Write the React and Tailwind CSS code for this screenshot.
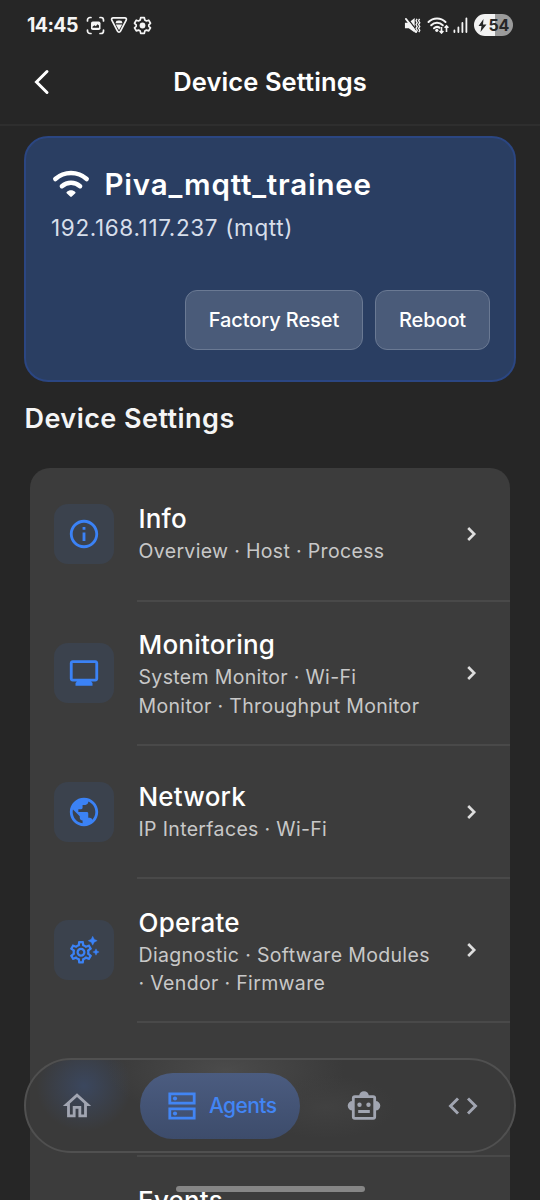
import React from 'react';
import {
  MdInfoOutline,
  MdMonitor,
  MdPublic,
  MdOutlineHome,
  MdOutlineSettings,
} from 'react-icons/md';

function StatusBar() {
  return (
    <div className="flex h-[50px] shrink-0 items-center justify-between pr-[27px] pl-[27px] text-[#f5f5f5]">
      <div className="flex items-center">
        <span className="w-[59px] text-[19.5px] leading-[24px] font-bold tracking-[-0.6px] whitespace-nowrap">14:45</span>
        <svg className="h-[19px] w-[19px]" viewBox="0 0 19 19" fill="none">
          <path d="M1.500 5V4a2.500 2.500 0 0 1 2.500-2.500h1M14 1.500h1A2.500 2.500 0 0 1 17.500 4v1M17.500 14v1a2.500 2.500 0 0 1-2.500 2.500h-1M5 17.500H4A2.500 2.500 0 0 1 1.500 15v-1" stroke="currentColor" strokeWidth="1.700" strokeLinecap="round" />
          <rect x="5" y="5.500" width="9.500" height="8.500" rx="1.800" fill="currentColor" />
          <path d="M6.500 10.800 8.500 9.300 9.800 10.200 11.500 8.200 13 9.500v2.300H6.500z" fill="#262626" />
        </svg>
        <svg className="ml-[5px] h-[18px] w-[18px]" viewBox="0 0 18 18" fill="none">
          <path d="M3.200 1.800h11.600c1.300 0 2 1.200 1.400 2.400l-5.700 10.900c-.7 1.300-2.300 1.300-3 0L1.800 4.200C1.200 3 1.900 1.800 3.200 1.800z" stroke="currentColor" strokeWidth="1.700" />
          <path d="M5.500 7.300 6.300 5c.4-.8 5-.8 5.400 0l.8 2.300z" fill="currentColor" />
          <path d="M5.800 8.600h6.400L9 14.200z" fill="currentColor" />
        </svg>
        <svg className="ml-[5px] h-[19px] w-[19px]" viewBox="0 0 19 19" fill="none">
          <path d="M7.700 1.700h3.600l.5 2.300 1.700 1 2.200-.8 1.800 3.100-1.700 1.500v1.500l1.700 1.500-1.800 3.100-2.200-.8-1.700 1-.5 2.300H7.700l-.5-2.300-1.700-1-2.200.8-1.800-3.100 1.700-1.500V8.800L1.500 7.300l1.800-3.100 2.200.8 1.700-1z" stroke="currentColor" strokeWidth="1.700" strokeLinejoin="round" />
          <circle cx="9.500" cy="9.500" r="2.900" fill="currentColor" />
        </svg>
      </div>
      <div className="flex items-center">
        <svg className="mr-px h-[17px] w-[17px]" viewBox="0 0 17 18" fill="none">
          <path d="M.5 6h4L10.800 1v15.500L4.500 12h-4z" fill="currentColor" />
          <path d="M2.800 1 13 14.200" stroke="#262626" strokeWidth="1.500" />
          <path d="M1.500 2 12.300 16" stroke="currentColor" strokeWidth="1.900" strokeLinecap="round" />
          <path d="m13.300 2-1 2 1.200 2-1.200 2 1.200 2-1.200 2 1.200 2-1 2M16 2l-1 2 1.200 2L15 8l1.200 2L15 12l1.200 2-1 2" stroke="currentColor" strokeWidth="1.400" />
        </svg>
        <svg className="ml-[5px] h-[18px] w-[22px]" viewBox="0 0 22 18" fill="none">
          <path d="M1.500 6a12 12 0 0 1 17 0M4.200 9.200a8.300 8.300 0 0 1 11.600 0M7 12.200a4.500 4.500 0 0 1 5.500-.5" stroke="currentColor" strokeWidth="2" strokeLinecap="round" />
          <circle cx="9.800" cy="14.300" r="1.600" fill="currentColor" />
          <path d="M14.500 11v6M12.600 15l1.900 2 1.900-2M19.500 16v-6M17.600 11.800l1.900-2 1.900 2" stroke="currentColor" strokeWidth="1.600" />
        </svg>
        <svg className="ml-[4px] h-[16px] w-[15px]" viewBox="0 0 15 16" fill="none">
          <path d="M1.400 15v-1.500M5.400 15v-4.500M9.400 15V6M13.400 15V1.500" stroke="currentColor" strokeWidth="1.800" strokeLinecap="round" />
        </svg>
        <div className="ml-[6px] flex h-[22px] w-[39px] items-center rounded-full bg-linear-to-r from-[#f2f2f2] from-54% to-[#9b9b9b] to-54% pl-[4px] text-[#262626]">
          <svg className="h-[13px] w-[9px]" viewBox="0 0 9 13">
            <path d="M5.500 0 .5 7h3L2.500 13 8.500 5.500H5z" fill="currentColor" />
          </svg>
          <span className="ml-[1.500px] text-[16px] leading-[22px] font-bold tracking-[-0.3px]">54</span>
        </div>
      </div>
    </div>
  );
}

function Header() {
  return (
    <div className="flex h-[76px] shrink-0 items-center border-b-2 border-[#2e2e2e] pb-[10px]">
      <div className="flex w-[84px] justify-center">
        <svg className="h-[26px] w-[18px]" viewBox="0 0 18 26" fill="none">
          <path d="M14 2.500 3.500 13 14 23.500" stroke="#fff" strokeWidth="3" strokeLinecap="round" />
        </svg>
      </div>
      <h1 className="flex-1 text-center text-[25.5px] leading-[32px] font-semibold tracking-[0.1px] text-white">Device Settings</h1>
      <div className="w-[84px]" />
    </div>
  );
}

function WifiIcon() {
  return (
    <svg className="h-[28px] w-[38px]" viewBox="0 0 38 28" fill="none">
      <path d="M3.300 9a23.500 23.500 0 0 1 31.400 0" stroke="#fff" strokeWidth="4.500" strokeLinecap="round" />
      <path d="M9.900 16.200a14 14 0 0 1 18.200 0" stroke="#fff" strokeWidth="4.500" strokeLinecap="round" />
      <path d="M14.700 21.900c2.300-2.300 6.300-2.300 8.600 0 .4.400.4.900 0 1.300l-3.500 3.300c-.5.500-1.100.5-1.600 0l-3.500-3.300c-.4-.4-.4-.9 0-1.300z" fill="#fff" />
    </svg>
  );
}

function DeviceCard() {
  return (
    <section className="mx-6 mt-[10px] flex h-[246px] shrink-0 flex-col rounded-[24px] border-2 border-[#2b4682] bg-[#2a3e62] pt-[27px] pr-[24px] pl-[26px]">
      <div className="flex h-[38px] items-center">
        <WifiIcon />
        <h2 className="ml-[14.500px] text-[29.5px] leading-[38px] font-semibold tracking-[0.8px] text-white">Piva_mqtt_trainee</h2>
      </div>
      <p className="mt-[11px] -ml-px text-[22.5px] leading-[28px] tracking-[0.65px] text-[#d7deea]">192.168.117.237 (mqtt)</p>
      <div className="mt-[48px] flex justify-end gap-[12px]">
        <button className="h-[60px] w-[178px] rounded-[12px] border-[1.5px] border-[#6a7993] bg-[#4a5b79] text-[20px] font-medium tracking-[-0.1px] text-white">Factory Reset</button>
        <button className="h-[60px] w-[115px] rounded-[12px] border-[1.5px] border-[#6a7993] bg-[#4a5b79] text-[20px] font-medium tracking-[-0.1px] text-white">Reboot</button>
      </div>
    </section>
  );
}

function OperateIcon() {
  return (
    <svg className="h-[28px] w-[32px]" viewBox="0 0 32 28" fill="none">
      <g stroke="currentColor" strokeWidth="0.4">
        <MdOutlineSettings x="-0.5" y="2.700" size={27} />
      </g>
      <path d="M24.700 .2 26.200 3.200 29.200 4.700 26.200 6.200 24.700 9.200 23.200 6.200 20.200 4.700 23.200 3.200zM28 12.800 29 15 31.200 16 29 17 28 19.200 27 17 24.800 16 27 15z" fill="currentColor" stroke="currentColor" strokeWidth="0.4" />
    </svg>
  );
}

const rows = [
  { title: 'Info', lines: ['Overview · Host · Process'], icon: <MdInfoOutline size={34} />, height: 'h-[134px]', shift: 'pb-[1px]' },
  { title: 'Monitoring', lines: ['System Monitor · Wi-Fi', 'Monitor · Throughput Monitor'], icon: <MdMonitor size={34} />, height: 'h-[144px]', shift: 'pt-[1px]' },
  { title: 'Network', lines: ['IP Interfaces · Wi-Fi'], icon: <MdPublic size={34} />, height: 'h-[133px]', shift: '' },
  { title: 'Operate', lines: ['Diagnostic · Software Modules', '· Vendor · Firmware'], icon: <OperateIcon />, height: 'h-[144px]', shift: 'pt-[2px]' },
];

function SettingsRow({ title, lines, icon, height, shift }) {
  return (
    <div className={`flex shrink-0 pl-[24px] ${height}`}>
      <div className="flex items-center pb-[2px]">
        <div className="flex h-[60px] w-[60px] items-center justify-center rounded-[14px] bg-[#3b424d] text-[#3b82f6]">{icon}</div>
      </div>
      <div className="ml-[23px] flex flex-1 items-center border-b-2 border-[#494949] pl-[1.500px]">
        <div className={`flex-1 whitespace-nowrap ${shift}`}>
          <h3 className="text-[26px] leading-[36px] font-medium tracking-[0.2px] text-white">{title}</h3>
          {lines.map((line) => (
            <p key={line} className="text-[19.5px] leading-[28.5px] tracking-[0.34px] text-[#c8c8c8]">{line}</p>
          ))}
        </div>
        <svg className="mr-[32px] h-[16px] w-[12px]" viewBox="0 0 12 16" fill="none">
          <path d="m2.200 2 6 6-6 6" stroke="#dedede" strokeWidth="2.600" />
        </svg>
      </div>
    </div>
  );
}

function AgentsIcon() {
  return (
    <svg className="h-[28px] w-[28px]" viewBox="0 0 28 28" fill="none">
      <path d="M1.800 1.800h24.400v9.400H1.800zM1.800 16.800h24.400v9.400H1.800z" stroke="currentColor" strokeWidth="2.800" />
      <circle cx="7" cy="6.500" r="2.100" fill="currentColor" />
      <circle cx="7" cy="21.500" r="2.100" fill="currentColor" />
    </svg>
  );
}

function RobotIcon() {
  return (
    <svg className="h-[29px] w-[34px]" viewBox="0 0 34 29" fill="none">
      <path d="M12.200 5a4.800 4.800 0 0 1 9.600 0zM5.500 10v9.600a4.800 4.800 0 0 1 0-9.600zM28.500 10v9.600a4.800 4.800 0 0 0 0-9.600z" fill="currentColor" />
      <rect x="6.300" y="5.700" width="21.400" height="21.600" rx="1.500" stroke="currentColor" strokeWidth="2.800" />
      <circle cx="12.500" cy="13.700" r="2.200" fill="currentColor" />
      <circle cx="21.500" cy="13.700" r="2.200" fill="currentColor" />
      <path d="M11.200 20.500h11.600" stroke="currentColor" strokeWidth="2.800" />
    </svg>
  );
}

function CodeIcon() {
  return (
    <svg className="h-[18px] w-[30px]" viewBox="0 0 30 18" fill="none">
      <path d="M10 1.500 2.500 9l7.500 7.500M20 1.500 27.500 9 20 16.500" stroke="currentColor" strokeWidth="2.900" />
    </svg>
  );
}

function BottomNav() {
  return (
    <nav className="absolute top-[1058px] left-6 h-[95px] w-[492px] overflow-hidden rounded-full border-2 border-[#505050] bg-[#3a3a3a]/90">
      <div className="absolute -top-[20px] left-[10px] h-[92px] w-[96px] bg-radial from-[#3b475e] to-transparent to-70%" />
      <div className="absolute -top-[40px] left-[80px] h-[100px] w-[240px] bg-radial from-[#4b4b4b] to-transparent to-70%" />
      <div className="absolute top-[15px] left-[230px] h-[64px] w-[140px] bg-radial from-[#414141] to-transparent to-70%" />
      <div className="relative flex h-full items-center text-[#a1a5b1]">
        <div className="flex w-[102px] justify-center">
          <MdOutlineHome size={34} />
        </div>
        <div className="ml-[12px] flex h-[66px] w-[160px] items-center rounded-full bg-linear-to-b from-[#4b5c80] to-[#3d4c6b] pl-[28px] text-[#4285f4]">
          <AgentsIcon />
          <span className="ml-[13px] text-[21px] leading-[28px] font-medium tracking-[-0.6px]">Agents</span>
        </div>
        <div className="ml-[45.500px] flex w-[36px] justify-center">
          <RobotIcon />
        </div>
        <div className="ml-[62px] flex w-[38px] justify-center">
          <CodeIcon />
        </div>
      </div>
    </nav>
  );
}

export default function App() {
  return (
    <div className="relative flex h-[1200px] w-[540px] flex-col overflow-hidden bg-[#262626] font-['Inter',sans-serif]">
      <StatusBar />
      <Header />
      <DeviceCard />
      <h2 className="mt-[18.500px] ml-[24.500px] shrink-0 text-[27px] leading-[36px] font-semibold tracking-[0.45px] text-[#f5f5f5]">Device Settings</h2>
      <section className="mx-[30px] mt-[31.500px] flex h-[760px] shrink-0 flex-col overflow-hidden rounded-t-[20px] bg-[#3c3c3c]">
        {rows.map((row) => (
          <SettingsRow key={row.title} {...row} />
        ))}
        <div className="ml-[107px] h-[133.5px] shrink-0 border-b-2 border-[#494949]" />
        <h3 className="mt-[26px] ml-[108px] text-[26px] leading-[36px] font-medium tracking-[0.2px] text-white">Events</h3>
      </section>
      <BottomNav />
      <div className="absolute top-[1186px] left-[176px] h-[6px] w-[189px] rounded-full bg-[#868686]" />
    </div>
  );
}
